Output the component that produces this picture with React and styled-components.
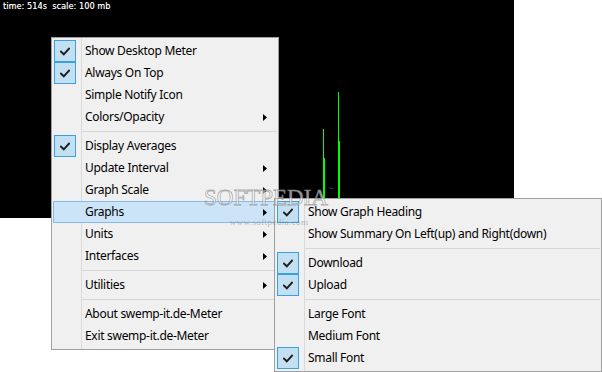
import React from 'react';
import styled, { createGlobalStyle } from 'styled-components';

const GlobalStyle = createGlobalStyle`
  html, body { margin: 0; padding: 0; background: #ffffff; }
  body { width: 602px; height: 372px; overflow: hidden; }
`;

const Screen = styled.div`
  position: relative;
  width: 602px;
  height: 372px;
  background: #ffffff;
  overflow: hidden;
  font-family: "Noto Sans", "Open Sans", sans-serif;
`;

const MeterWindow = styled.div`
  position: relative;
  width: 514px;
  height: 218px;
  background: #000000;
`;

const GraphSvg = styled.svg`
  display: block;
`;

const MeterInfo = styled.div`
  position: absolute;
  left: 3px;
  top: 3px;
  font-family: "DejaVu Sans", sans-serif;
  font-size: 8px;
  line-height: 8px;
  letter-spacing: 0.12px;
  color: #ffffff;
  white-space: pre;
  text-shadow: 0.3px 0 0 rgba(255, 255, 255, 0.6);
`;

const Menu = styled.div`
  position: absolute;
  left: ${p => p.$left}px;
  top: ${p => p.$top}px;
  width: ${p => p.$width}px;
  box-sizing: border-box;
  border: 1px solid #a0a0a0;
  padding: 2px 1px;
  background:
    linear-gradient(to right, transparent 29px, #dadada 29px, #dadada 30px, transparent 30px),
    #f0f0f0;
  display: flex;
  flex-direction: column;
`;

const Item = styled.div`
  display: flex;
  align-items: center;
  height: 22px;
  box-sizing: border-box;
  border: 1px solid ${p => (p.$active ? '#84bbec' : 'transparent')};
  background: ${p => (p.$active ? '#cce4f7' : 'transparent')};
  color: #000000;
  font-size: 12px;
  white-space: nowrap;
`;

const CheckCell = styled.div`
  width: 28px;
  height: 22px;
  flex: none;
  display: flex;
  align-items: center;
  margin-left: -1px;
`;

const CheckBox = styled.div`
  width: 22px;
  height: 22px;
  box-sizing: border-box;
  margin-left: 1px;
  border: 1px solid #3aa0e0;
  background: #c3e0f2;
  display: flex;
  align-items: center;
  justify-content: center;
`;

const Label = styled.span`
  flex: 1;
  padding-left: 4px;
  padding-bottom: 2px;
  letter-spacing: -0.3px;
`;

const ArrowCell = styled.div`
  width: 22px;
  flex: none;
  display: flex;
  align-items: center;
  justify-content: center;
`;

const Separator = styled.div`
  height: 1px;
  margin: 3px 0 3px 29px;
  background: #d7d7d7;
`;

const Watermark = styled.div`
  position: absolute;
  left: 204px;
  top: 185px;
  pointer-events: none;
  display: flex;
  flex-direction: column;
  align-items: center;
`;

const WatermarkTitle = styled.div`
  font-family: "Liberation Serif", serif;
  font-size: 23px;
  line-height: 26px;
  color: rgba(255, 255, 255, 0.6);
  -webkit-text-stroke: 0.8px rgba(120, 120, 120, 0.6);
`;

const TradeMark = styled.span`
  font-family: "DejaVu Sans", sans-serif;
  font-size: 6px;
  vertical-align: top;
  line-height: 10px;
  color: rgba(150, 150, 150, 0.8);
  -webkit-text-stroke: 0;
`;

const WatermarkUrl = styled.div`
  font-family: "Liberation Serif", serif;
  font-size: 9px;
  line-height: 10px;
  letter-spacing: 0.4px;
  color: rgba(140, 140, 140, 0.6);
  margin-top: 6px;
`;

const Check = () => (
  <svg width="10" height="9" viewBox="0 0 10 9">
    <path d="M1 4.6 L3.8 7.3 L9 1.6" fill="none" stroke="#1e1e1e" strokeWidth="2" strokeLinecap="square" />
  </svg>
);

const Arrow = () => (
  <svg width="4" height="7" viewBox="0 0 4 7">
    <polygon points="0,0 4,3.5 0,7" fill="#000" />
  </svg>
);

const mainItems = [
  { label: 'Show Desktop Meter', checked: true },
  { label: 'Always On Top', checked: true },
  { label: 'Simple Notify Icon' },
  { label: 'Colors/Opacity', sub: true },
  { sep: true },
  { label: 'Display Averages', checked: true },
  { label: 'Update Interval', sub: true },
  { label: 'Graph Scale', sub: true },
  { label: 'Graphs', sub: true, active: true },
  { label: 'Units', sub: true },
  { label: 'Interfaces', sub: true },
  { sep: true },
  { label: 'Utilities', sub: true },
  { sep: true },
  { label: 'About swemp-it.de-Meter' },
  { label: 'Exit swemp-it.de-Meter' },
];

const graphItems = [
  { label: 'Show Graph Heading', checked: true },
  { label: 'Show Summary On Left(up) and Right(down)' },
  { sep: true },
  { label: 'Download', checked: true },
  { label: 'Upload', checked: true },
  { sep: true },
  { label: 'Large Font' },
  { label: 'Medium Font' },
  { label: 'Small Font', checked: true },
];

const MenuList = ({ items, left, top, width }) => (
  <Menu $left={left} $top={top} $width={width}>
    {items.map((it, i) =>
      it.sep ? (
        <Separator key={i} />
      ) : (
        <Item key={i} $active={it.active}>
          <CheckCell>{it.checked && <CheckBox><Check /></CheckBox>}</CheckCell>
          <Label>{it.label}</Label>
          {it.sub && <ArrowCell><Arrow /></ArrowCell>}
        </Item>
      )
    )}
  </Menu>
);

const bars = [
  { x: 323, y: 129 },
  { x: 324, y: 158 },
  { x: 338, y: 92 },
  { x: 339, y: 141 },
];

export default function App() {
  return (
    <Screen>
      <GlobalStyle />
      <MeterWindow>
        <GraphSvg width="514" height="218" viewBox="0 0 514 218">
          {bars.map((b, i) => (
            <rect key={i} x={b.x} y={b.y} width="1" height={218 - b.y} fill="#00ff00" />
          ))}
        </GraphSvg>
        <MeterInfo>{'time: 514s  scale: 100 mb'}</MeterInfo>
      </MeterWindow>
      <MenuList items={mainItems} left={51} top={37} width={228} />
      <MenuList items={graphItems} left={274} top={198} width={328} />
      <Watermark>
        <WatermarkTitle>
          SOFTPEDIA<TradeMark>™</TradeMark>
        </WatermarkTitle>
        <WatermarkUrl>www.softpedia.com</WatermarkUrl>
      </Watermark>
    </Screen>
  );
}
